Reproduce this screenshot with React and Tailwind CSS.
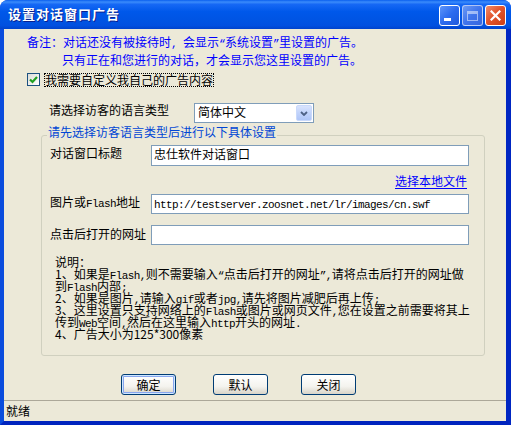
import React from 'react';

const L = ({ children }) => (
  <span className="font-['Liberation_Mono',monospace] text-[11px] tracking-[-0.6px] leading-[0]">{children}</span>
);

function CaptionButtons() {
  return (
    <div className="ml-auto mt-[5px] flex gap-[2px]">
      <div className="w-[21px] h-[21px] rounded-[3px] border border-white bg-[linear-gradient(135deg,#5D95FA_0%,#2C6BEF_50%,#1F59DC_100%)] relative">
        <div className="absolute left-[4px] top-[12px] w-[7px] h-[3px] bg-white" />
      </div>
      <div className="w-[21px] h-[21px] rounded-[3px] border border-white/60 bg-[linear-gradient(135deg,#6C9AF5_0%,#3F74EC_50%,#3666DE_100%)] flex items-center justify-center">
        <div className="w-[11px] h-[10px] border border-white/50 border-t-[3px]" />
      </div>
      <div className="w-[21px] h-[21px] rounded-[3px] border border-white bg-[linear-gradient(135deg,#F08D6C_0%,#E2552D_45%,#CC3E14_100%)] flex items-center justify-center">
        <svg width="11" height="11" viewBox="0 0 11 11">
          <path d="M1.5 1.5 L9.5 9.5 M9.5 1.5 L1.5 9.5" stroke="#fff" strokeWidth="2.2" strokeLinecap="square" />
        </svg>
      </div>
    </div>
  );
}

function Field({ label, labelTop, value, mono, h, className }) {
  return (
    <div className={`flex items-start ${className}`}>
      <div className={`w-[109px] pl-[8px] leading-[14px] whitespace-nowrap ${labelTop}`}>{label}</div>
      <div className={`w-[318px] ${h} border border-[#7F9DB9] bg-white pl-[2px] pt-[1px] leading-[14px] whitespace-nowrap`}>
        {mono ? <span className="font-['Liberation_Mono',monospace] text-[11px] tracking-[-0.6px]">{value}</span> : value}
      </div>
    </div>
  );
}

function XPButton({ children, active, className }) {
  return (
    <div
      className={`w-[55px] h-[21px] rounded-[3px] border border-[#003C74] bg-[linear-gradient(180deg,#FFFFFF_0%,#F4F3EE_60%,#D8D4C8_100%)] flex items-center justify-center leading-[14px] ${
        active ? 'shadow-[inset_0_0_0_1px_#CEE7FF,inset_0_0_0_2px_#88A6EE]' : ''
      } ${className}`}
    >
      {children}
    </div>
  );
}

export default function App() {
  return (
    <div className="w-[511px] h-[425px] flex flex-col rounded-t-[8px] overflow-hidden bg-[#0A47DA] font-['Noto_Sans_CJK_SC',sans-serif] text-[12px] text-black">
      <div className="h-[29px] shrink-0 flex items-start pl-[8px] pr-[5px] bg-[linear-gradient(180deg,#0A5FEE_0%,#3B8CFB_7%,#1668F5_15%,#0058EA_40%,#0054E3_70%,#0150E0_88%,#0043CC_100%)]">
        <span className="mt-[6px] leading-[16px] text-white font-bold text-[13px] tracking-[1px] [text-shadow:1px_1px_0_#0A1F8F]">设置对话窗口广告</span>
        <CaptionButtons />
      </div>

      <div className="flex-1 flex flex-col border-l-4 border-l-[#0A4CDD] border-r-[5px] border-r-[#0026C2] border-b-4 border-b-[#0024BE] bg-[#ECE9D8]">
        <div className="mt-[6px] ml-[23px] leading-[14px] text-[#0000FF] whitespace-nowrap">
          备注：对话还没有被接待时<L>, </L>会显示<L>“</L>系统设置<L>”</L>里设置的广告。
        </div>
        <div className="mt-[4px] ml-[58px] leading-[14px] text-[#0000FF] whitespace-nowrap">
          只有正在和您进行的对话，才会显示您这里设置的广告。
        </div>

        <div className="mt-[6px] ml-[23px] h-[14px] flex items-start">
          <div className="w-[13px] h-[13px] border border-[#1C5180] bg-[linear-gradient(135deg,#DCDCD7_0%,#FFFFFF_100%)] flex items-center justify-center">
            <svg width="11" height="11" viewBox="0 0 11 11">
              <path d="M2 5.5 L4.5 8 L9 3" fill="none" stroke="#21A121" strokeWidth="2.2" />
            </svg>
          </div>
          <div className="ml-[4px] h-[14px] border border-dotted border-black leading-[12px] whitespace-nowrap">
            我需要自定义我自己的广告内容
          </div>
        </div>

        <div className="mt-[16px] flex items-start">
          <div className="ml-[45px] w-[145px] leading-[14px] whitespace-nowrap">请选择访客的语言类型</div>
          <div className="w-[120px] h-[20px] border border-[#7F9DB9] bg-white flex items-stretch">
            <div className="flex-1 pl-[3px] pt-[1px] leading-[14px]">简体中文</div>
            <div className="w-[16px] m-[1px] rounded-[2px] border border-[#C9D9FB] bg-[linear-gradient(180deg,#D9E4FD_0%,#C1D3FB_50%,#AFC6F8_100%)] flex items-center justify-center">
              <svg width="8" height="5" viewBox="0 0 8 5">
                <path d="M1 1 L4 4 L7 1" fill="none" stroke="#4D6185" strokeWidth="1.8" />
              </svg>
            </div>
          </div>
        </div>

        <div className="mt-[2px] ml-[37px] w-[444px] flex flex-col">
          <div className="ml-[6px] relative z-10 self-start px-[1px] bg-[#ECE9D8] leading-[14px] text-[#0046D5] whitespace-nowrap">
            请先选择访客语言类型后进行以下具体设置
          </div>
          <div className="-mt-[4px] h-[221px] rounded-[3px] border border-[#D0D0BF] flex flex-col">
            <Field className="mt-[9px]" labelTop="mt-[1px]" label="对话窗口标题" value="忠仕软件对话窗口" h="h-[21px]" />
            <div className="mt-[8px] flex justify-end pr-[17px]">
              <span className="leading-[14px] text-[#0000FF] underline underline-offset-[2px]">选择本地文件</span>
            </div>
            <Field
              className="mt-[6px]"
              labelTop="mt-[1px]"
              label={<>图片或<L>Flash</L>地址</>}
              value="http://testserver.zoosnet.net/lr/images/cn.swf"
              mono
              h="h-[20px]"
            />
            <Field className="mt-[11px]" labelTop="mt-[2px]" label="点击后打开的网址" value="" h="h-[20px]" />
            <div className="mt-[11px] pl-[13px] leading-[12px] whitespace-nowrap">
              <div>说明：</div>
              <div>1、如果是<L>Flash,</L>则不需要输入<L>“</L>点击后打开的网址<L>”,</L>请将点击后打开的网址做</div>
              <div>到<L>Flash</L>内部<L>;</L></div>
              <div>2、如果是图片<L>,</L>请输入<L>gif</L>或者<L>jpg,</L>请先将图片减肥后再上传<L>;</L></div>
              <div>3、这里设置只支持网络上的<L>Flash</L>或图片或网页文件<L>,</L>您在设置之前需要将其上</div>
              <div>传到<L>Web</L>空间<L>,</L>然后在这里输入<L>http</L>开头的网址<L>.</L></div>
              <div>4、广告大小为125*300像素</div>
            </div>
          </div>
        </div>

        <div className="mt-[18px] flex">
          <XPButton active className="ml-[117px]">确定</XPButton>
          <XPButton className="ml-[37px]">默认</XPButton>
          <XPButton className="ml-[33px]">关闭</XPButton>
        </div>

        <div className="mt-auto h-[21px] border-t border-[#ACA899] pl-[2px] pt-[3px] leading-[14px]">就绪</div>
      </div>
    </div>
  );
}
